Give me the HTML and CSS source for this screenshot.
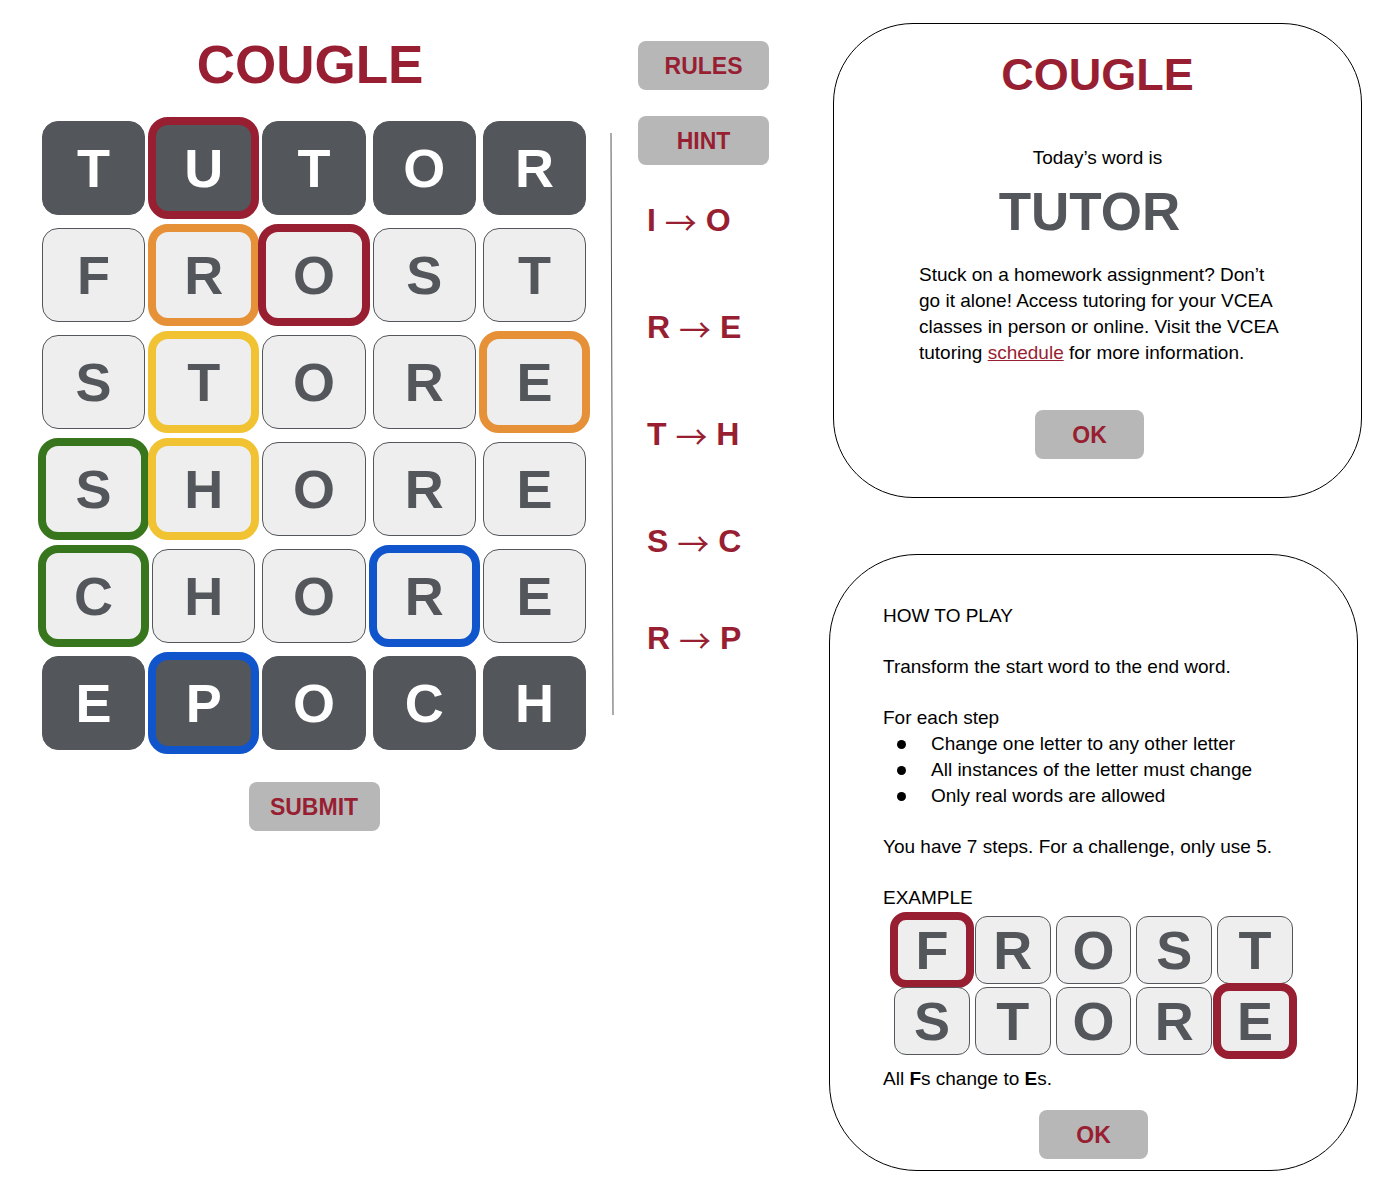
FILE: index.html
```html
<!DOCTYPE html>
<html lang="en">
<head>
<meta charset="utf-8">
<meta name="viewport" content="width=device-width, initial-scale=1">
<title>Cougle</title>
<link rel="stylesheet" href="styles.css">
</head>
<body>
<main class="layout">
  <section class="game">
    <h1 class="game-title">COUGLE</h1>
    <div class="board">
      <span class="tile dark">T</span><span class="tile dark ring red">U</span><span class="tile dark">T</span><span class="tile dark">O</span><span class="tile dark">R</span>
      <span class="tile">F</span><span class="tile ring orange">R</span><span class="tile ring red">O</span><span class="tile">S</span><span class="tile">T</span>
      <span class="tile">S</span><span class="tile ring yellow">T</span><span class="tile">O</span><span class="tile">R</span><span class="tile ring orange">E</span>
      <span class="tile ring green">S</span><span class="tile ring yellow">H</span><span class="tile">O</span><span class="tile">R</span><span class="tile">E</span>
      <span class="tile ring green">C</span><span class="tile">H</span><span class="tile">O</span><span class="tile ring blue">R</span><span class="tile">E</span>
      <span class="tile dark">E</span><span class="tile dark ring blue">P</span><span class="tile dark">O</span><span class="tile dark">C</span><span class="tile dark">H</span>
    </div>
    <button type="button" class="button">SUBMIT</button>
  </section>

  <svg class="divider" viewBox="0 0 4 582" preserveAspectRatio="none" aria-hidden="true"><path d="M1 0L3 582"/></svg>

  <aside class="side">
    <button type="button" class="button">RULES</button>
    <button type="button" class="button">HINT</button>
    <ul class="swaps">
      <li>I <span class="arrow">→</span> O</li>
      <li>R <span class="arrow">→</span> E</li>
      <li>T <span class="arrow">→</span> H</li>
      <li>S <span class="arrow">→</span> C</li>
      <li>R <span class="arrow">→</span> P</li>
    </ul>
  </aside>

  <div class="panels">
    <section class="panel result">
      <h2 class="panel-title">COUGLE</h2>
      <p class="lead">Today’s word is</p>
      <p class="word">TUTOR</p>
      <p class="blurb">Stuck on a homework assignment? Don’t go it alone! Access tutoring for your VCEA classes in person or online. Visit the VCEA tutoring <a href="#schedule">schedule</a> for more information.</p>
      <button type="button" class="button small">OK</button>
    </section>

    <section class="panel rules">
      <h2 class="rules-title">HOW TO PLAY</h2>
      <p>Transform the start word to the end word.</p>
      <div>
        <p>For each step</p>
        <ul class="steps">
          <li>Change one letter to any other letter</li>
          <li>All instances of the letter must change</li>
          <li>Only real words are allowed</li>
        </ul>
      </div>
      <p>You have 7 steps. For a challenge, only use 5.</p>
      <div>
        <h3 class="rules-title">EXAMPLE</h3>
        <div class="board example">
          <span class="tile ring red">F</span><span class="tile">R</span><span class="tile">O</span><span class="tile">S</span><span class="tile">T</span>
          <span class="tile">S</span><span class="tile">T</span><span class="tile">O</span><span class="tile">R</span><span class="tile ring red">E</span>
        </div>
        <p>All <b>F</b>s change to <b>E</b>s.</p>
      </div>
      <button type="button" class="button small">OK</button>
    </section>
  </div>
</main>
</body>
</html>
```
FILE: styles.css
```css
:root {
  --crimson: #981e32;
  --slate: #53565a;
}

* {
  box-sizing: border-box;
}

body {
  margin: 0;
  background: #fff;
  color: #000;
  font: 19px/26px "Liberation Sans", Arial, sans-serif;
}

h1, h2, h3, p, ul {
  margin: 0;
  padding: 0;
}

ul {
  list-style: none;
}

a {
  color: var(--crimson);
}

.layout {
  display: grid;
  grid-template-columns: 544fr 4px 131px 569fr;
  column-gap: 24px;
  align-items: start;
  padding: 23px 28px 24px 42px;
}

.button {
  width: 131px;
  height: 49px;
  padding: 0;
  border: 0;
  border-radius: 8px;
  background: #b7b7b7;
  color: var(--crimson);
  font: bold 23px/26px "Liberation Sans", Arial, sans-serif;
}

.button.small {
  width: 109px;
}

/* Word ladder */
.game {
  display: flex;
  flex-direction: column;
  align-items: center;
  padding-top: 11px;
}

.game-title {
  padding-right: 8px;
  color: var(--crimson);
  font-size: 53px;
  line-height: 62px;
}

.board {
  display: grid;
  grid-template-columns: repeat(5, 1fr);
  grid-auto-rows: 94px;
  gap: 13px 7px;
  width: 100%;
  margin: 25px 0 32px;
}

.tile {
  display: flex;
  align-items: center;
  justify-content: center;
  border: 1px solid var(--slate);
  border-radius: 16px;
  background: #eee;
  color: var(--slate);
  font-size: 54px;
  font-weight: bold;
  line-height: 62px;
}

.tile.dark {
  background: var(--slate);
  color: #fff;
}

.ring {
  outline: 8px solid;
  outline-offset: -4px;
}

.red { outline-color: var(--crimson); }
.orange { outline-color: #e69138; }
.yellow { outline-color: #f1c232; }
.green { outline-color: #38761d; }
.blue { outline-color: #1155cc; }

.divider {
  width: 4px;
  height: 582px;
  margin-top: 110px;
  fill: none;
  stroke: var(--slate);
}

/* Buttons and letter swaps */
.side {
  display: flex;
  flex-direction: column;
  gap: 26px;
  padding-top: 18px;
}

.swaps {
  padding: 10px 0 0 9px;
  color: var(--crimson);
  font-size: 32px;
  font-weight: bold;
  line-height: 38px;
}

.swaps li {
  margin-bottom: 69px;
}

.swaps li:nth-child(4) {
  margin-bottom: 59px;
}

.arrow {
  font-family: "Noto Sans CJK JP", sans-serif;
  font-weight: normal;
  line-height: 0;
  vertical-align: -4px;
}

/* Dialog panels */
.panels {
  display: flex;
  flex-direction: column;
  gap: 56px;
  padding-left: 36px;
}

.panel {
  display: flex;
  flex-direction: column;
  border: 1px solid #000;
}

.result {
  align-items: center;
  margin-left: 4px;
  padding: 25px 80px 38px;
  border-radius: 80px;
}

.panel-title {
  color: var(--crimson);
  font-size: 45px;
  line-height: 52px;
}

.lead {
  margin-top: 44px;
}

.word {
  margin-top: 10px;
  padding-right: 16px;
  color: var(--slate);
  font-size: 53px;
  font-weight: bold;
  line-height: 62px;
}

.blurb {
  margin: 19px 0 44px;
  padding-left: 5px;
}

.result .button {
  margin-right: 16px;
}

.rules {
  gap: 25px;
  margin-right: 4px;
  padding: 48px 53px 11px;
  border-radius: 88px;
}

.rules-title {
  font-size: 19px;
  font-weight: normal;
}

.steps li {
  display: flex;
  align-items: center;
  gap: 25px;
  padding-left: 14px;
}

.steps li::before {
  content: "";
  width: 9px;
  height: 9px;
  border-radius: 50%;
  background: #000;
}

.example {
  grid-auto-rows: 68px;
  gap: 3px 5px;
  width: auto;
  margin: 5px 11px 11px;
}

.example .tile {
  border-radius: 12px;
}

.rules .button {
  align-self: center;
  margin-top: -7px;
}
```
